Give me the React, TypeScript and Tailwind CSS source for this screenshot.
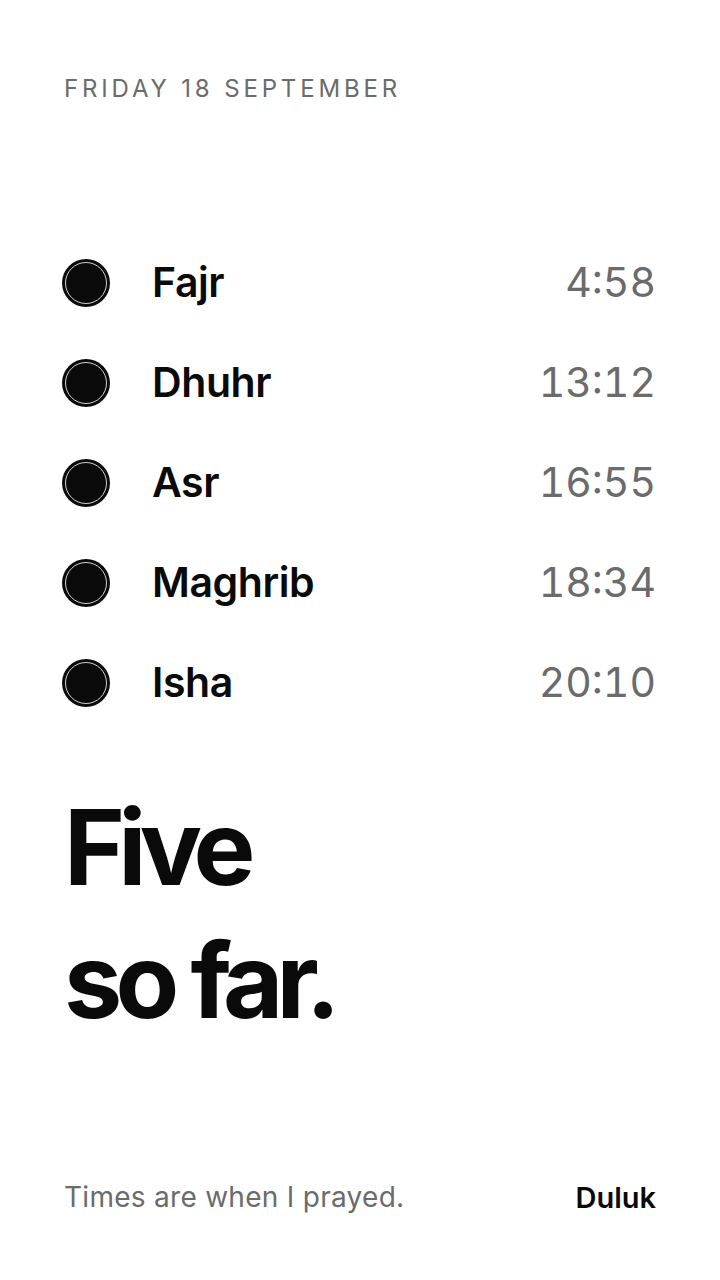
import React from "react";

const prayers = [
  { name: "Fajr", time: "4:58" },
  { name: "Dhuhr", time: "13:12" },
  { name: "Asr", time: "16:55" },
  { name: "Maghrib", time: "18:34" },
  { name: "Isha", time: "20:10" },
];

export default function App() {
  return (
    <div
      className="w-[720px] h-[1280px] bg-white flex flex-col px-[64px] text-[#0a0a0a]"
      style={{ fontFamily: "Inter, 'Noto Sans', sans-serif" }}
    >
      <div className="pt-[75px] text-[24px] leading-[28px] tracking-[0.16em] text-[#6b6b6b]">
        FRIDAY 18 SEPTEMBER
      </div>
      <div className="mt-[130px] flex flex-col">
        {prayers.map((p) => (
          <div key={p.name} className="h-[100px] flex items-center">
            <div className="w-[48px] h-[48px] rounded-full bg-[#0a0a0a] flex items-center justify-center -ml-[2px]">
              <div className="w-[42px] h-[42px] rounded-full border border-[#cfcfcf]" />
            </div>
            <div className="ml-[42px] text-[41px] font-semibold tracking-[-0.01em]">{p.name}</div>
            <div className="ml-auto text-[41px] text-[#6b6b6b] tabular-nums">{p.time}</div>
          </div>
        ))}
      </div>
      <div className="mt-[48px] text-[104px] font-bold leading-[133px] tracking-[-0.065em]">
        <div>Five</div>
        <div>so far.</div>
      </div>
      <div className="mt-auto pb-[61px] flex items-center justify-between text-[28px]">
        <span className="text-[#6b6b6b] tracking-[0.01em]">Times are when I prayed.</span>
        <span className="font-semibold text-[29px]">Duluk</span>
      </div>
    </div>
  );
}
